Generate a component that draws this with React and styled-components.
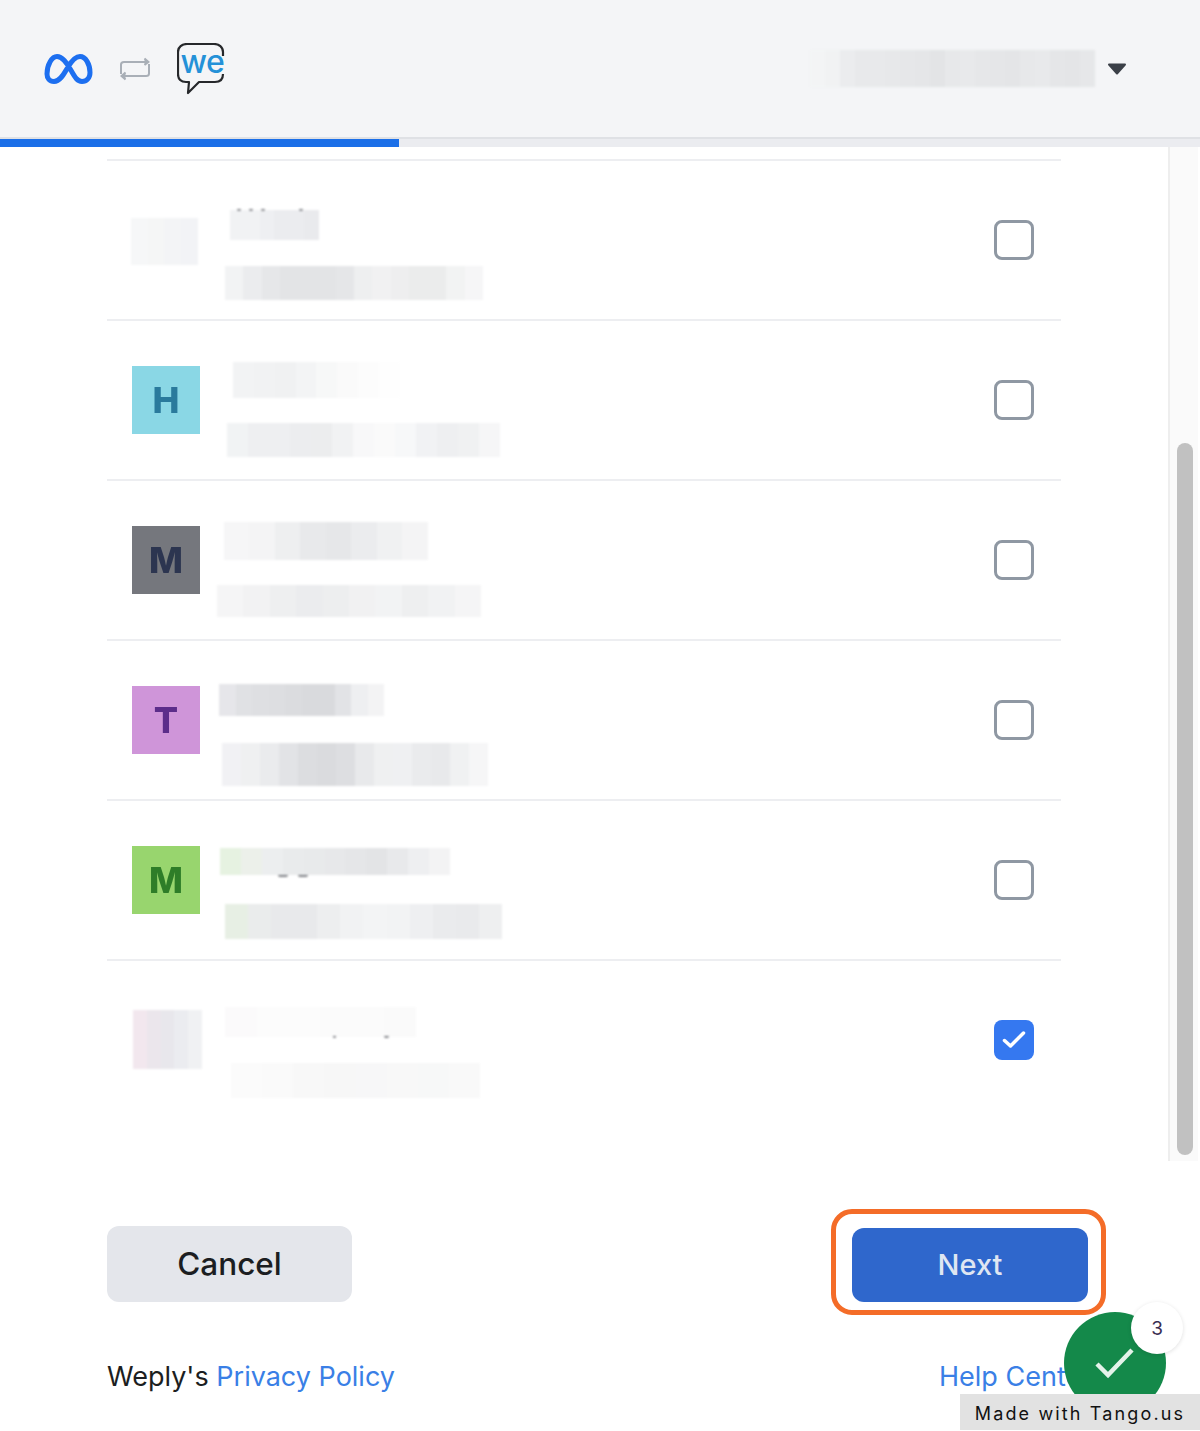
import styled, { createGlobalStyle } from 'styled-components'

const GlobalStyle = createGlobalStyle`
  * { box-sizing: border-box; }
  html, body { margin: 0; padding: 0; background: #fff; }
  body { font-family: Inter, "Liberation Sans", sans-serif; }
`

const Page = styled.div`
  position: relative;
  width: 1200px;
  height: 1431px;
  overflow: hidden;
  background: #fff;
`

const Header = styled.header`
  height: 139px;
  display: flex;
  align-items: center;
  padding: 0 73px 0 44px;
  gap: 27px;
  background: #f4f5f7;
  border-bottom: 2px solid #dfe1e5;
`

const Account = styled.div`
  margin-left: auto;
  display: flex;
  align-items: center;
  gap: 12px;
`

const Progress = styled.div`
  height: 8px;
  background: #ebecf0;
`

const ProgressFill = styled.div`
  width: 399px;
  height: 100%;
  background: #1b6fe8;
`

const Body = styled.div`
  height: 1014px;
  display: flex;
  padding-right: 2px;
`

const List = styled.div`
  flex: 1;
  padding: 12px 107px 0;
  overflow: hidden;
`

const Row = styled.div`
  height: 160px;
  display: flex;
  align-items: flex-start;
  padding: 0 27px 0 25px;
  border-top: 2px solid #edeef1;
`

const Avatar = styled.div`
  flex: none;
  width: 68px;
  height: 68px;
  margin-top: 45px;
  display: flex;
  align-items: center;
  justify-content: center;
  background: ${(p) => p.$bg};
  color: ${(p) => p.$fg};
  font-family: Inter, "Liberation Sans", sans-serif;
  font-size: 36px;
  font-weight: 800;
  line-height: 1;

  span {
    filter: blur(0.6px);
  }
`

const BlurAvatar = styled.div`
  flex: none;
  width: ${(p) => p.$w}px;
  height: ${(p) => p.$h}px;
  margin: ${(p) => p.$mt}px ${(p) => 68 - p.$w - p.$ml}px 0 ${(p) => p.$ml}px;
  background: ${(p) => p.$bg};
  filter: blur(1px);
`

const TextCol = styled.div`
  flex: none;
  width: 300px;
  display: flex;
  flex-direction: column;
`

const Block = styled.div`
  position: relative;
  width: ${(p) => p.$w}px;
  height: ${(p) => p.$h}px;
  margin-top: ${(p) => p.$mt}px;
  margin-left: ${(p) => p.$ml}px;
  background: ${(p) => p.$bg};
  filter: blur(0.8px);
`

const Speck = styled.i`
  position: absolute;
  left: ${(p) => p.$x}px;
  top: ${(p) => p.$y}px;
  width: ${(p) => p.$w || 4}px;
  height: 2px;
  border-radius: 0 0 3px 3px;
  background: #7f8186;
`

const Checkbox = styled.div`
  flex: none;
  width: 40px;
  height: 40px;
  margin-top: 59px;
  margin-left: auto;
  display: flex;
  align-items: center;
  justify-content: center;
  border-radius: 8px;
  background: ${(p) => (p.$checked ? '#3578f0' : '#fff')};
  border: ${(p) => (p.$checked ? 'none' : '3px solid #8f98a3')};
`

const ScrollTrack = styled.div`
  flex: none;
  width: 30px;
  padding: 296px 5px 0 7px;
  background: #fafafa;
  border-left: 2px solid #eeeeee;
`

const ScrollThumb = styled.div`
  width: 16px;
  height: 712px;
  border-radius: 8px;
  background: #c1c1c1;
`

const Actions = styled.div`
  display: flex;
  justify-content: space-between;
  align-items: flex-start;
  padding: 48px 94px 0 107px;
`

const CancelButton = styled.button`
  width: 245px;
  height: 76px;
  margin-top: 17px;
  padding: 0 0 2px;
  border: none;
  border-radius: 12px;
  background: #e4e6eb;
  color: #1c1e21;
  font-family: inherit;
  font-size: 31.5px;
  font-weight: 500;
`

const Highlight = styled.div`
  width: 275px;
  height: 106px;
  padding: 14px 13px 8px 16px;
  border: 5px solid #f46c28;
  border-radius: 21px;
`

const NextButton = styled.button`
  width: 100%;
  height: 100%;
  padding: 0 0 2px;
  border: none;
  border-radius: 12px;
  background: #2f67cc;
  color: #dfe6f2;
  font-family: inherit;
  font-size: 29px;
  font-weight: 500;
`

const Links = styled.div`
  display: flex;
  justify-content: space-between;
  margin-top: 45px;
  padding: 0 0 0 107px;
  font-size: 27px;
  line-height: 34px;
  color: #1c1e21;
`

const Link = styled.a`
  color: #3a7fe6;
  white-space: nowrap;
`

const HelpLink = styled(Link)`
  width: 261px;
`

const Done = styled.div`
  position: absolute;
  left: 1064px;
  top: 1312px;
  width: 102px;
  height: 102px;
  display: flex;
  align-items: center;
  justify-content: center;
  border-radius: 50%;
  background: #14894a;
`

const Count = styled.div`
  position: absolute;
  left: 1131px;
  top: 1302px;
  width: 52px;
  height: 52px;
  display: flex;
  align-items: center;
  justify-content: center;
  border-radius: 50%;
  background: #fff;
  box-shadow: 0 1px 4px rgba(0, 0, 0, 0.12);
  color: #3a2d52;
  font-size: 19px;
`

const Watermark = styled.div`
  position: absolute;
  left: 960px;
  top: 1394px;
  width: 240px;
  height: 36px;
  display: flex;
  align-items: center;
  justify-content: center;
  padding-top: 2px;
  background: #e2e2e2;
  color: #111;
  font-size: 18px;
  letter-spacing: 2.15px;
  white-space: nowrap;
`

// hard stops so a bar looks like a pixelated redaction
const mosaic = (shades) => {
  const step = 100 / shades.length
  const stops = shades.map(
    (c, i) => `${c} ${(i * step).toFixed(2)}% ${((i + 1) * step).toFixed(2)}%`
  )
  return `linear-gradient(90deg, ${stops.join(', ')})`
}

const rows = [
  {
    avatarBlur: {
      w: 67, h: 47, mt: 57, ml: -1,
      bg: mosaic(['#f6f7f8', '#f5f6f6', '#f3f4f6', '#f2f3f6']),
    },
    blocks: [
      {
        w: 89, h: 30, mt: 49, ml: 30,
        bg: mosaic(['#f1f2f4', '#f1f2f4', '#eeeff2', '#ebecef', '#ebecef', '#e9eaed']),
        specks: [[7, -1], [19, -1], [31, -1], [69, -1]],
      },
      {
        w: 258, h: 34, mt: 26, ml: 25,
        bg: mosaic(['#f2f3f4', '#ebecee', '#e6e7e9', '#e3e4e6', '#e3e4e6', '#e3e4e6', '#e5e6e8', '#eeeff0', '#f1f1f2', '#eeeeef', '#ebecec', '#ebecec', '#f2f3f3', '#f6f6f7']),
      },
    ],
  },
  {
    letter: 'H', bg: '#8ad7e5', fg: '#2a7a9c',
    blocks: [
      {
        w: 167, h: 36, mt: 41, ml: 33,
        bg: mosaic(['#f2f3f4', '#f1f2f3', '#f0f1f2', '#f3f4f5', '#f7f8f8', '#fafafa', '#fcfcfc', '#fefefe']),
      },
      {
        w: 273, h: 34, mt: 25, ml: 27,
        bg: mosaic(['#f1f3f4', '#eeeff1', '#eeeff1', '#ecedef', '#ecedee', '#f1f2f3', '#f8f8f9', '#fafafa', '#f7f8f9', '#f1f2f4', '#eeeff1', '#f0f1f2', '#f6f6f7']),
      },
    ],
  },
  {
    letter: 'M', bg: '#75777d', fg: '#2c3550',
    blocks: [
      {
        w: 204, h: 38, mt: 41, ml: 24,
        bg: mosaic(['#f6f6f7', '#f4f4f5', '#eeeff0', '#e8e9eb', '#e6e7e9', '#ebecee', '#f0f1f2', '#f4f4f5']),
      },
      {
        w: 264, h: 32, mt: 25, ml: 17,
        bg: mosaic(['#f5f5f6', '#f2f2f3', '#eeeff0', '#ebecee', '#edeeef', '#f1f1f2', '#f2f3f4', '#eeeff0', '#f1f2f3', '#f5f5f6']),
      },
    ],
  },
  {
    letter: 'T', bg: '#cf95d9', fg: '#5c2d8a',
    blocks: [
      {
        w: 165, h: 32, mt: 43, ml: 19,
        bg: mosaic(['#e6e6ea', '#e0e1e4', '#dedfe2', '#dddee1', '#dbdcdf', '#d9dadd', '#d9dadd', '#e2e3e6', '#eeeff1', '#f3f3f4']),
      },
      {
        w: 266, h: 43, mt: 27, ml: 22,
        bg: mosaic(['#f1f1f4', '#eff0f1', '#eaebed', '#e2e3e6', '#dcdde0', '#dadbde', '#dddee1', '#e8e9eb', '#eff0f1', '#eff0f2', '#eaebed', '#e8e9eb', '#f0f1f2', '#f6f6f7']),
      },
    ],
  },
  {
    letter: 'M', bg: '#98d56e', fg: '#2e7d28',
    blocks: [
      {
        w: 230, h: 27, mt: 47, ml: 20,
        bg: mosaic(['#e6f2e1', '#ecf0ea', '#eceeef', '#e9ebec', '#e8eaeb', '#e7e8ea', '#e5e6e8', '#e3e4e6', '#e8e9eb', '#eeeff1', '#f3f3f4']),
        specks: [[58, 27, 10], [78, 27, 10]],
      },
      {
        w: 277, h: 35, mt: 29, ml: 25,
        bg: mosaic(['#e7efe4', '#eaecec', '#e8e9eb', '#e8e9eb', '#edeeef', '#f1f2f3', '#f3f4f5', '#f2f3f4', '#eeeff1', '#eaebed', '#e9eaec', '#eeeff0']),
      },
    ],
  },
  {
    avatarBlur: {
      w: 69, h: 59, mt: 49, ml: 1,
      bg: mosaic(['#f2e7ee', '#ebe6ec', '#e8e7ec', '#ebecf0', '#f0f1f3']),
    },
    checked: true,
    blocks: [
      {
        w: 191, h: 30, mt: 46, ml: 25,
        bg: mosaic(['#fbfafb', '#fcfcfc', '#fcfcfc', '#fbfbfb', '#fbfbfb', '#fafafa']),
        specks: [[108, 29, 3], [159, 29, 5]],
      },
      {
        w: 249, h: 35, mt: 26, ml: 31,
        bg: mosaic(['#fbfbfb', '#fafafa', '#f8f8f8', '#f7f7f7', '#f7f7f8', '#f8f8f8', '#f7f8f8', '#f9f9f9']),
      },
    ],
  },
]

const accountShades = [
  '#f3f4f5', '#f1f2f3', '#ebecee', '#e8e9eb', '#e8e9eb', '#e7e8ea', '#e6e7e9', '#e5e6e8', '#e3e4e6', '#e7e8ea',
  '#e8e9eb', '#e6e7e9', '#e5e6e8', '#e4e5e7', '#e7e8ea', '#e8e9eb', '#e5e6e8', '#e4e5e7', '#e6e7e9',
]

const MetaLogo = () => (
  <svg width="49" height="32" viewBox="0 0 49 32" fill="none">
    <path
      d="M3 21C3 11.500 8 3.500 13 3.500c5.500 0 9.500 6 13.500 13 4 7 6.500 12 11.500 12 4.500 0 8-3.500 8-9C46 11 41.500 3.500 36 3.500c-5 0-9 5.500-12 10.500C20.500 20 16.500 28.500 10 28.500c-4.500 0-7-3-7-7.500Z"
      stroke="#1d6ff0"
      strokeWidth="5"
      strokeLinejoin="round"
    />
  </svg>
)

const SwapIcon = () => (
  <svg width="30" height="24" viewBox="0 0 30 24" fill="none" stroke="#a9afb7" strokeWidth="2">
    <path d="M1 17V7.500C1 5.500 2 5 4 5h24" />
    <path d="M24.500 1.500 28.500 5l-4 3" fill="#a9afb7" />
    <path d="M29 7v9.500c0 2-1 2.500-3 2.500H2" />
    <path d="M5.500 15.500 1.500 19l4 3.500" fill="#a9afb7" />
  </svg>
)

const WeLogo = () => (
  <svg width="52" height="52" viewBox="0 0 52 52" fill="none">
    <path
      d="M10 1h27c5 0 9 3 9 8v22c0 5-3 8-8 8H22L11 50l1-11H9c-5 0-8-3-8-8V9c0-5 4-8 9-8Z"
      fill="#f4f5f7"
      stroke="#26282b"
      strokeWidth="2.200"
      strokeLinejoin="round"
    />
    <rect x="42" y="13" width="8" height="18" fill="#f4f5f7" />
    <text
      x="3.500"
      y="30"
      fill="#2491d8"
      fontFamily="Inter, 'Liberation Sans', sans-serif"
      fontSize="32"
      fontWeight="500"
      letterSpacing="-0.5"
    >
      we
    </text>
  </svg>
)

const Caret = () => (
  <svg width="20" height="12" viewBox="0 0 20 12">
    <path d="M2 1.500h16L10 10.500Z" fill="#3b4048" stroke="#3b4048" strokeWidth="2" strokeLinejoin="round" />
  </svg>
)

const App = () => {
  return (
    <Page>
      <GlobalStyle />
      <Header>
        <MetaLogo />
        <SwapIcon />
        <WeLogo />
        <Account>
          <Block $w={285} $h={37} $mt={0} $ml={0} $bg={mosaic(accountShades)} />
          <Caret />
        </Account>
      </Header>
      <Progress>
        <ProgressFill />
      </Progress>
      <Body>
        <List>
          {rows.map((row, i) => (
            <Row key={i}>
              {row.letter ? (
                <Avatar $bg={row.bg} $fg={row.fg}>
                  <span>{row.letter}</span>
                </Avatar>
              ) : (
                <BlurAvatar
                  $w={row.avatarBlur.w}
                  $h={row.avatarBlur.h}
                  $mt={row.avatarBlur.mt}
                  $ml={row.avatarBlur.ml}
                  $bg={row.avatarBlur.bg}
                />
              )}
              <TextCol>
                {row.blocks.map((b, j) => (
                  <Block key={j} $w={b.w} $h={b.h} $mt={b.mt} $ml={b.ml} $bg={b.bg}>
                    {b.specks &&
                      b.specks.map(([x, y, w], k) => <Speck key={k} $x={x} $y={y} $w={w} />)}
                  </Block>
                ))}
              </TextCol>
              <Checkbox $checked={row.checked}>
                {row.checked && (
                  <svg width="24" height="20" viewBox="0 0 24 20" fill="none">
                    <path d="M2.500 10.500 8.500 16 21.500 3" stroke="#fff" strokeWidth="3.500" strokeLinecap="round" strokeLinejoin="round" />
                  </svg>
                )}
              </Checkbox>
            </Row>
          ))}
        </List>
        <ScrollTrack>
          <ScrollThumb />
        </ScrollTrack>
      </Body>
      <Actions>
        <CancelButton>Cancel</CancelButton>
        <Highlight>
          <NextButton>Next</NextButton>
        </Highlight>
      </Actions>
      <Links>
        <span>
          Weply's <Link>Privacy Policy</Link>
        </span>
        <HelpLink>Help Center</HelpLink>
      </Links>
      <Done>
        <svg width="40" height="32" viewBox="0 0 40 32" fill="none">
          <path d="M2 17 13 28 37 3" stroke="#e4f3ea" strokeWidth="4.500" />
        </svg>
      </Done>
      <Count>3</Count>
      <Watermark>Made with Tango.us</Watermark>
    </Page>
  )
}

export default App
